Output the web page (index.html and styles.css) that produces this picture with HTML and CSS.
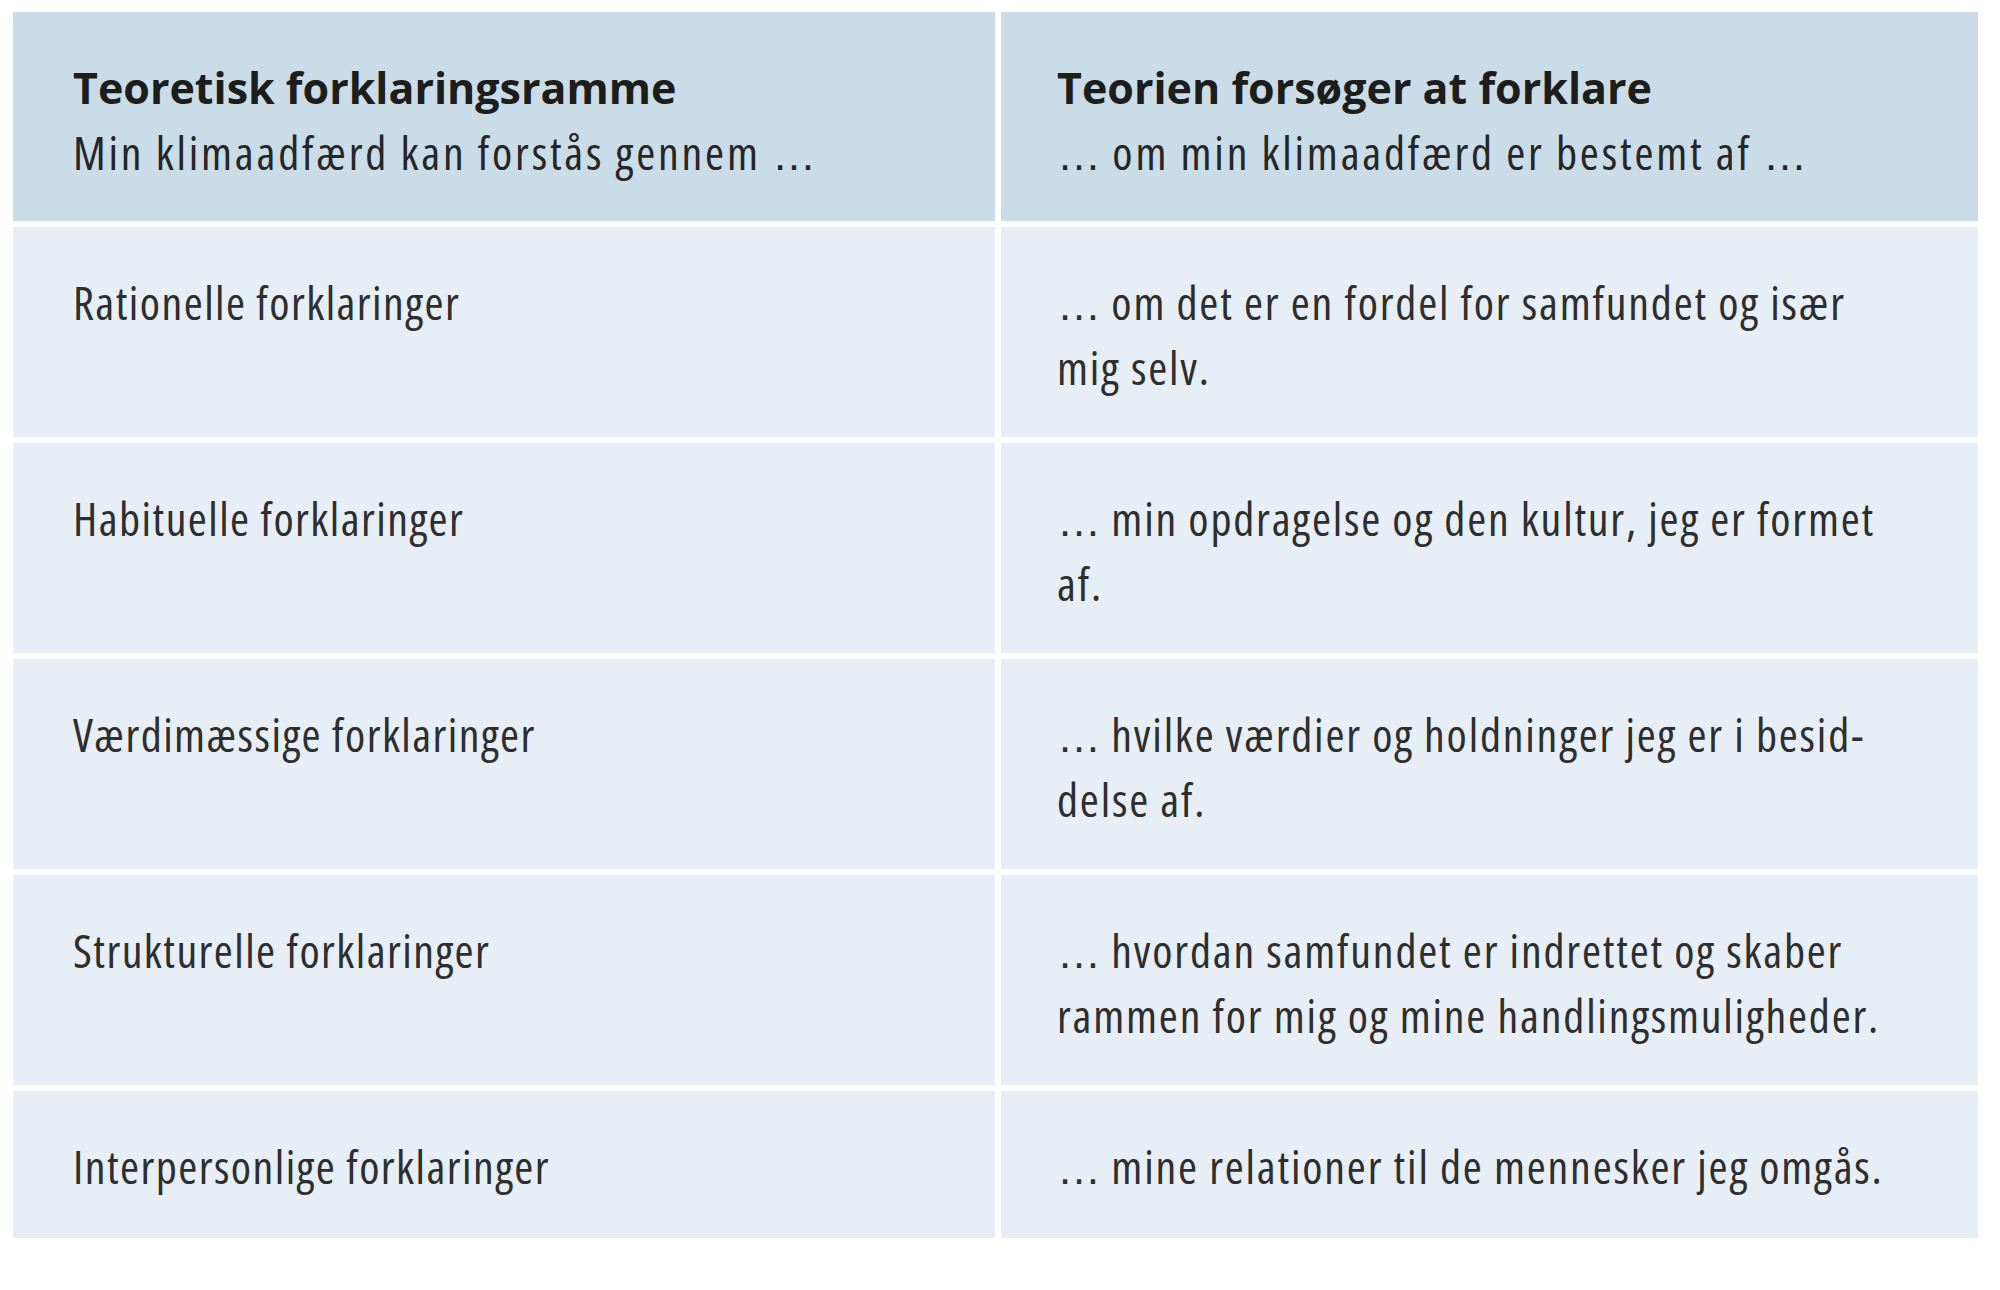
FILE: index.html
```html
<!DOCTYPE html>
<html lang="da">
<head>
<meta charset="utf-8">
<title>Teoretisk forklaringsramme</title>
<link rel="stylesheet" href="styles.css">
</head>
<body>
<div class="table">
  <div class="cell head left">
    <div class="title">Teoretisk forklaringsramme</div>
    <div class="sub">Min klimaadfærd kan forstås gennem <span class="ell">…</span></div>
  </div>
  <div class="cell head right">
    <div class="title">Teorien forsøger at forklare</div>
    <div class="sub"><span class="ell">…</span> om min klimaadfærd er bestemt af <span class="ell">…</span></div>
  </div>

  <div class="cell left">Rationelle forklaringer</div>
  <div class="cell right"><span class="ell">…</span> om det er en fordel for samfundet og især<br>mig selv.</div>

  <div class="cell left">Habituelle forklaringer</div>
  <div class="cell right"><span class="ell">…</span> min opdragelse og den kultur, jeg er formet<br>af.</div>

  <div class="cell left">Værdimæssige forklaringer</div>
  <div class="cell right"><span class="ell">…</span> hvilke værdier og holdninger jeg er i besid-<br>delse af.</div>

  <div class="cell left">Strukturelle forklaringer</div>
  <div class="cell right"><span class="ell">…</span> hvordan samfundet er indrettet og skaber<br>rammen for mig og mine handlingsmuligheder.</div>

  <div class="cell left last">Interpersonlige forklaringer</div>
  <div class="cell right last"><span class="ell">…</span> mine relationer til de mennesker jeg omgås.</div>
</div>
</body>
</html>
```
FILE: styles.css
```css
html, body {
  margin: 0;
  padding: 0;
  background: #ffffff;
}

body {
  padding: 12px 13px;
  font-family: "Open Sans", "DejaVu Sans Condensed", sans-serif;
  font-stretch: 75%;
  font-weight: 400;
  font-size: 46px;
  letter-spacing: 1.8px;
  line-height: 65px;
  color: #2e2e2e;
}

.table {
  display: grid;
  grid-template-columns: 982px 977px;
  column-gap: 6px;
  row-gap: 6px;
  width: 1965px;
}

.cell {
  background: #e7eef5;
  padding: 43px 30px 37px 60px;
  white-space: nowrap;
}

.cell.left {
  letter-spacing: 1.45px;
}

.cell.right {
  padding-left: 56px;
}

.cell.last {
  padding-bottom: 39px;
}

.cell.head {
  background: #cadce7;
  padding-top: 43px;
  padding-bottom: 36px;
}

.title {
  font-weight: 700;
  font-stretch: 100%;
  font-size: 43px;
  letter-spacing: 0;
  color: #1d1d1b;
}

.sub {
  color: #262626;
  letter-spacing: 2.8px;
}

.ell {
  font-family: "Liberation Sans", sans-serif;
  font-stretch: normal;
  font-weight: 400;
  font-size: 44px;
  letter-spacing: 0;
  line-height: 0;
}
```
